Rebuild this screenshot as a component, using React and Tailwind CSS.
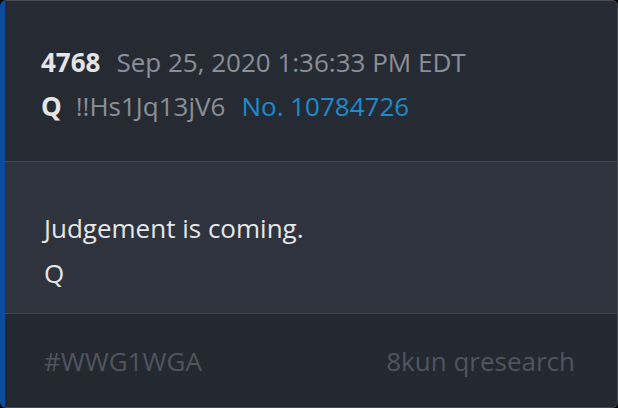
import React from 'react';

const font = { fontFamily: '"Open Sans", "Noto Sans", sans-serif' };

export default function App() {
  return (
    <div className="w-[618px] h-[408px] bg-black" style={font}>
      <div className="flex h-full flex-col overflow-hidden rounded-[6px] border border-[#454a53] border-l-[5px] border-l-[#0b4c9c] bg-[#262a33]">
        {/* Header */}
        <div className="flex h-[160px] flex-col justify-center gap-[8px] pl-[36px] pt-[6px]">
          <div className="flex items-baseline gap-[16px] text-[26px] leading-[36px]">
            <span className="font-bold text-[#e4e5e7]">4768</span>
            <span className="text-[#8a8f98]">Sep 25, 2020 1:36:33 PM EDT</span>
          </div>
          <div className="flex items-baseline gap-[14px] text-[26px] leading-[36px]">
            <span className="font-bold text-[#e4e5e7]">Q</span>
            <span className="text-[#8a8f98]">!!Hs1Jq13jV6</span>
            <span className="ml-[2px] text-[#1b8ccd]">No. 10784726</span>
          </div>
        </div>

        {/* Body */}
        <div className="flex h-[153px] flex-col justify-center border-y border-[#41464f] bg-[#2e333d] pl-[39px] pt-[26px] text-[26px] leading-[45px] text-[#e6e7e9]">
          <div>Judgement is coming.</div>
          <div>Q</div>
        </div>

        {/* Footer */}
        <div className="flex flex-1 items-center justify-between bg-[#242830] pl-[39px] pr-[42px] pt-[2px] text-[26px] text-[#50555e]">
          <span>#WWG1WGA</span>
          <span>8kun qresearch</span>
        </div>
      </div>
    </div>
  );
}
